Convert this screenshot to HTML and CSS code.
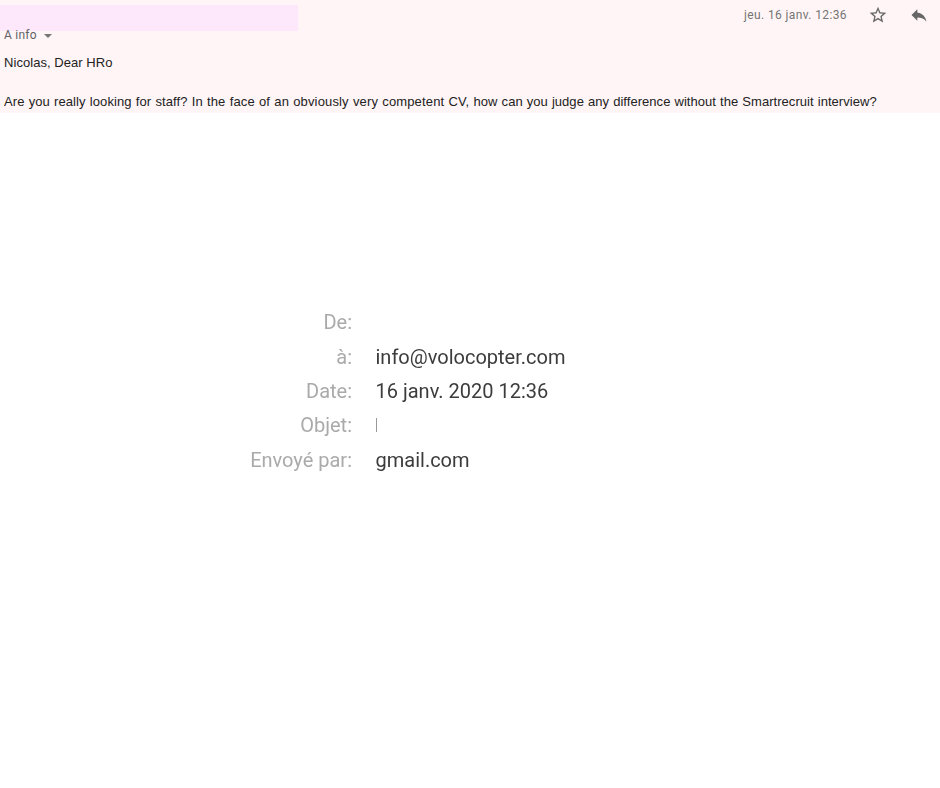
FILE: index.html
```
<!DOCTYPE html>
<html lang="fr">
<head>
<meta charset="utf-8">
<title>Message</title>
<link rel="stylesheet" href="styles.css">
</head>
<body>
<section class="mail">
  <div class="top">
    <div class="sender"></div>
    <div class="meta">
      <span class="time">jeu. 16 janv. 12:36</span>
      <svg class="star" width="20" height="20" viewBox="0 0 24 24"><path fill="#666" d="M22 9.24l-7.19-.62L12 2 9.19 8.63 2 9.24l5.46 4.73L5.82 21 12 17.27 18.18 21l-1.63-7.03L22 9.24zM12 15.4l-3.76 2.27 1-4.28-3.32-2.88 4.38-.38L12 6.1l1.71 4.04 4.38.38-3.32 2.88 1 4.28L12 15.4z"/></svg>
      <svg class="reply" width="20" height="20" viewBox="0 0 24 24"><path fill="#666" d="M10 9V5l-7 7 7 7v-4.1c5 0 8.5 1.6 11 5.1-1-5-4-10-11-11z"/></svg>
    </div>
  </div>
  <div class="to">A info <span class="caret"></span></div>
  <p class="greet">Nicolas, Dear HRo</p>
  <p class="body"><span class="lead">Are you really looking for staff? </span><span class="mid">In the face of an obviously very competent CV, </span><span class="tail">how can you judge any difference without the Smartrecruit interview?</span></p>
</section>
<dl class="details">
  <dt>De:</dt><dd></dd>
  <dt>à:</dt><dd>info@volocopter.com</dd>
  <dt>Date:</dt><dd>16 janv. 2020 12:36</dd>
  <dt>Objet:</dt><dd><span class="bar"></span></dd>
  <dt>Envoyé par:</dt><dd>gmail.com</dd>
</dl>
</body>
</html>
```
FILE: styles.css
```
html, body { margin: 0; padding: 0; background: #fff; }
body { width: 940px; height: 788px; overflow: hidden; font-family: Roboto, "Liberation Sans", sans-serif; }
.mail { background: #fff5f6; height: 113px; box-sizing: border-box; padding-top: 5px; }
.top { display: flex; justify-content: space-between; height: 26px; }
.sender { width: 298px; height: 26px; background: #fde8fb; }
.meta { display: flex; align-items: center; height: 20px; color: #757575; font-size: 12px; padding-right: 11px; }
.time { margin-right: 21px; letter-spacing: .38px; }
.star { margin-right: 21px; }
.to { font-size: 12px; color: #5f6368; padding-left: 4px; height: 15px; line-height: 9px; letter-spacing: .25px; }
.caret { display: inline-block; width: 0; height: 0; margin-left: 4px; border: 4px solid transparent; border-top-color: #757575; border-bottom-width: 0; vertical-align: 1px; }
.greet, .body { margin: 0; padding-left: 4px; font: 13px/16px "Liberation Sans", Arial, sans-serif; color: #222; }
.greet { margin-top: 9px; letter-spacing: .05px; }
.body { margin-top: 23px; word-spacing: .4px; }
.lead { letter-spacing: .1px; }
.mid { letter-spacing: .15px; }
.tail { letter-spacing: .045px; }
.details { display: grid; grid-template-columns: 352px auto; grid-auto-rows: 34.4px; column-gap: 23.5px; margin: 192.2px 0 0; font-size: 20px; line-height: 34.4px; filter: blur(.35px); }
.details dt { text-align: right; color: #aaa; }
.details dd { margin: 0; color: #3c3c3c; }
.bar { display: inline-block; width: 1px; height: 14px; background: #999; vertical-align: 0; }
```
